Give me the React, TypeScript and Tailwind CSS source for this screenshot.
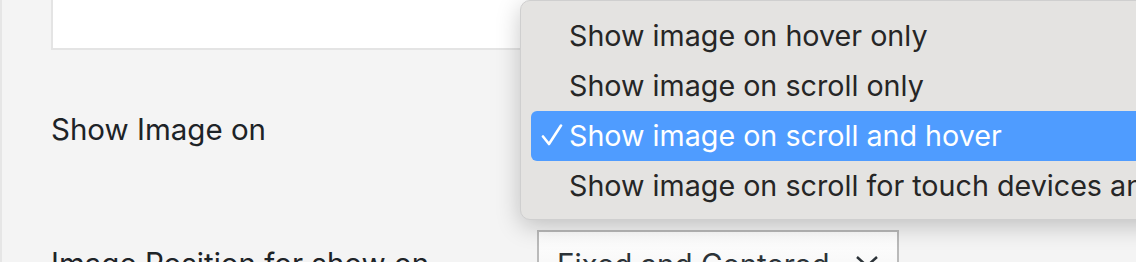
import React from "react";

const items = [
  "Show image on hover only",
  "Show image on scroll only",
  "Show image on scroll and hover",
  "Show image on scroll for touch devices and on hover for others",
];

export default function App() {
  return (
    <div
      className="relative h-[262px] w-[1136px] overflow-hidden bg-[#f4f4f4] border-l-2 border-[#e6e6e6]"
      style={{ fontFamily: "Inter, Roboto, 'Noto Sans', sans-serif" }}
    >
      <div className="pl-[49px]">
        <div className="h-[50px] w-[1000px] bg-white border-l-2 border-b-2 border-[#e4e4e4]" />
        <div className="mt-[39px] flex h-[80px] items-center">
          <div className="w-[486px] text-[29.5px] leading-[34px] text-[#1d2327]">Show Image on</div>
        </div>
        <div className="mt-[61px] flex h-[62px] items-start">
          <div className="w-[486px] mt-[16px] text-[29.5px] leading-[34px] text-[#1d2327]">Image Position for show on</div>
          <div className="flex h-[62px] w-[362px] items-start justify-between border-2 border-[#bababa] bg-gradient-to-b from-white to-[#f3f3f3] pl-[18px] pr-[18px]">
            <span className="mt-[15px] text-[29.5px] leading-[34px] text-[#2c3338]">Fixed and Centered</span>
            <svg width="24" height="14" viewBox="0 0 24 14" className="mt-[23px]">
              <path d="M2 2 L12 11 L22 2" fill="none" stroke="#2c3338" strokeWidth="2.5" />
            </svg>
          </div>
        </div>
      </div>

      <div className="absolute left-[518px] top-0 w-[700px] h-[220px] rounded-[10px] bg-[#e4e3e1] border border-[#cfcfcf] shadow-[0_6px_24px_rgba(0,0,0,0.22)] px-[10px] py-[10px]">
        {items.map((t, i) => {
          const sel = i === 2;
          return (
            <div
              key={t}
              className={`relative flex h-[50px] items-center whitespace-nowrap rounded-[6px] pl-[38px] text-[28.7px] ${
                sel ? "bg-[#4f9cff] text-white" : "text-[#262626]"
              }`}
            >
              {sel && (
                <svg
                  width="22"
                  height="22"
                  viewBox="0 0 22 22"
                  className="absolute left-[10px] top-[13px]"
                >
                  <path
                    d="M2 12.5 L8 20 L20 1.5"
                    fill="none"
                    stroke="white"
                    strokeWidth="2.6"
                    strokeLinecap="round"
                    strokeLinejoin="round"
                  />
                </svg>
              )}
              {t}
            </div>
          );
        })}
      </div>
    </div>
  );
}
